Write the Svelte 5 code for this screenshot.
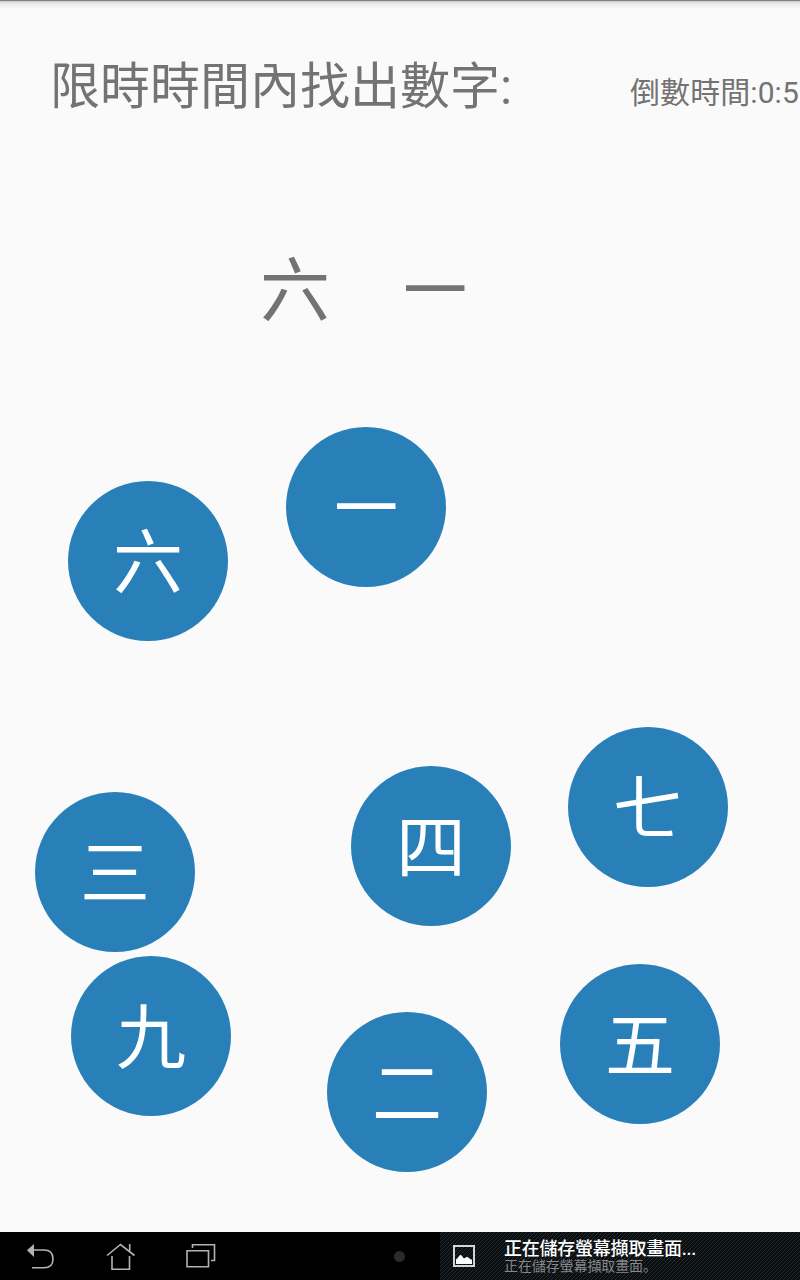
<script>
  const balls = [
    ['一', 286, 427], ['六', 68, 481], ['七', 568, 727], ['四', 351, 766],
    ['三', 35, 792], ['九', 71, 956], ['五', 560, 964], ['二', 327, 1012]
  ];
</script>

<main>
  <header><h1>限時時間內找出數字:</h1><div class="timer">倒數時間:0:5</div></header>
  <div class="answer"><span>六</span><span class="one">一</span></div>
  {#each balls as [n, x, y]}
    <button class="ball" style="left:{x}px;top:{y}px"><span class:one={n === '一'}>{n}</span></button>
  {/each}
  <footer>
    <nav>
      <svg viewBox="0 0 240 48" width="240" height="48" fill="none" stroke="#b0b5b0" stroke-width="1.6">
        <path d="M32 18H44C50 18 53 21.500 53 27S50 35.800 44 35.800H32" /><path d="M27 18.300L34 12V25Z" fill="#b0b5b0" stroke="none" />
        <path d="M107 23.500L120.500 12.500L134.500 23.500M112 24V37.200H129.500V24M129.700 12V19" />
        <path d="M187 18.800H208.500V34.800H187ZM192.500 16V12.700H214.500V28.500H211" />
      </svg>
      <i></i>
    </nav>
    <aside>
      <svg viewBox="0 0 24 24" width="24" height="24"><path d="M2 2H22V22H2Z" fill="none" stroke="#d5d5d5" stroke-width="2"/><path d="M4 20V15.500Q6 14 7.500 11.500Q9 10.500 10 12Q11.500 15 13 14Q15 12 17 14Q18 15.500 20 15.500V20Z" fill="#fff"/></svg>
      <div><b>正在儲存螢幕擷取畫面...</b><small>正在儲存螢幕擷取畫面。</small></div>
    </aside>
  </footer>
</main>

<style>
  :global(body) { margin: 0; }
  main { position: relative; width: 800px; height: 1280px; overflow: hidden; display: flex; flex-direction: column; background: #fafafa; color: #737373; font-family: Roboto, "Noto Sans CJK TC", sans-serif; }
  header { display: flex; height: 170px; box-sizing: border-box; padding-top: 51px; white-space: nowrap; background: linear-gradient(#858384 0 1px, #c8c6c7 1px, #e8e8e8 3px, #fafafa 9px); }
  h1 { margin: 0 0 0 50px; width: 580px; flex: none; font-size: 50px; line-height: 72px; font-weight: 400; }
  .timer { font-size: 30px; line-height: 84px; letter-spacing: .08px; }
  .answer { display: flex; gap: 70px; margin: 72px 0 0 260px; font-size: 70px; line-height: 100px; }
  .answer span, .ball span { display: inline-block; }
  .one { transform: scaleX(.91); }
  .ball { position: absolute; width: 160px; height: 160px; border: 0; border-radius: 50%; padding: 3px 0 0; background: #2980b9; color: white; font: 70px/155px Roboto, "Noto Sans CJK TC", sans-serif; }
  .ball span { padding-top: 3px; line-height: 155px; }
  footer { display: flex; height: 48px; margin-top: auto; background: #000; }
  nav { width: 440px; display: flex; align-items: center; }
  nav i { width: 11px; height: 11px; border-radius: 50%; background: #2b2b2b; margin-left: 154px; }
  aside { width: 360px; display: flex; align-items: center; color: #fff; background: repeating-linear-gradient(135deg, #0a0e10 0 2px, #252c2e 2px 2.828px); }
  aside svg { margin: 0 28px 0 12px; }
  aside div { display: flex; flex-direction: column; padding-top: 1px; }
  b { font-size: 18px; line-height: 20px; font-weight: 500; letter-spacing: -.23px; }
  small { font: 14px/15px Roboto, "Noto Sans CJK SC", sans-serif; letter-spacing: -.1px; color: #888; }
</style>
